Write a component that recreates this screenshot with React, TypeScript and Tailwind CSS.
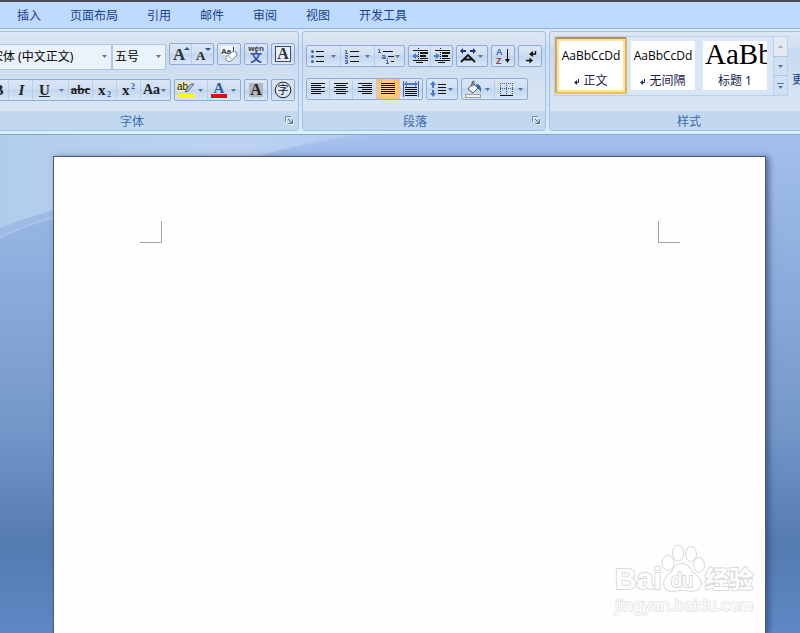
import React from "react";

const CJK = "font-['Noto_Sans','Noto_Sans_CJK_SC',sans-serif]";
const SERIF = "font-['Liberation_Serif','Noto_Sans_CJK_SC',serif]";

type Rect = [number, number, number, number];

function Bars({ items, fill = "#111" }: { items: Rect[]; fill?: string }) {
  return (
    <g fill={fill} shapeRendering="crispEdges">
      {items.map(([x, y, w, h], i) => (
        <rect key={i} x={x} y={y} width={w} height={h} />
      ))}
    </g>
  );
}

function Icon({ children, size = 18 }: { children: React.ReactNode; size?: number }) {
  return (
    <svg width={size} height={18} viewBox={`0 0 ${size} 18`} className="shrink-0 overflow-visible" aria-hidden="true">
      {children}
    </svg>
  );
}

function Arrow() {
  return (
    <svg width="5" height="3" viewBox="0 0 5 3" className="shrink-0" aria-hidden="true">
      <path d="M0 0h5L2.5 3z" fill="#5577a8" />
    </svg>
  );
}

function Tool({
  label,
  width = "flex-1",
  active = false,
  menu = false,
  children,
}: {
  label: string;
  width?: string;
  active?: boolean;
  menu?: boolean;
  children: React.ReactNode;
}) {
  return (
    <button
      type="button"
      aria-label={label}
      title={label}
      className={`flex h-full items-center ${menu ? "justify-between pl-0.5 pr-1" : "justify-center"} ${width} ${
        active ? "bg-radial from-[#ffe0a0] to-[#fdb765]" : ""
      }`}
    >
      {children}
      {menu && <Arrow />}
    </button>
  );
}

function Cluster({ width, children }: { width: string; children: React.ReactNode }) {
  return (
    <div
      className={`flex h-[22px] shrink-0 divide-x divide-[#b7cdea] rounded-[2px] border border-[#8fadd4] bg-[linear-gradient(#dae6f5,#d0dff2_45%,#c2d5ee_50%,#d8e6f8)] ${width}`}
    >
      {children}
    </div>
  );
}

function Group({ title, width, children }: { title: string; width: string; children: React.ReactNode }) {
  return (
    <section
      aria-label={title}
      className={`flex shrink-0 flex-col rounded-[3px] border border-[#a3c0e0] bg-[linear-gradient(#dce6f3,#d4e0f0_15px,#c8d9ee_16px,#dbe7f6_80px)] ${width}`}
    >
      <div className="h-20">{children}</div>
      <div className="flex h-[19px] items-center bg-[#c2d8f1] text-[#3e6aaa]">
        <h2 className="flex-1 pt-0.5 text-center text-xs leading-4">{title}</h2>
        <button type="button" aria-label={`${title}设置`} className="flex h-4 w-[18px] items-center justify-center">
          <svg width="9" height="9" viewBox="0 0 9 9" aria-hidden="true">
            <path d="M1.500 7V1.500H7M9 3.500v5H3.500" fill="none" stroke="#fff" strokeOpacity=".8" />
            <path d="M.5 6V.5H6" fill="none" stroke="#6689b5" />
            <path d="M3 3l4 4M7.500 3.500v4h-4" fill="none" stroke="#49709f" />
          </svg>
        </button>
      </div>
    </section>
  );
}

function Combo({ label, value, width, text }: { label: string; value: string; width: string; text: string }) {
  return (
    <label className={`relative block h-[26px] ${width}`}>
      <select
        aria-label={label}
        className={`h-full w-full appearance-none border border-[#afc6e4] bg-[#eaf2fb] text-xs text-black outline-none ${text}`}
      >
        <option>{value}</option>
      </select>
      <span className="pointer-events-none absolute top-[12px] right-[5px]">
        <Arrow />
      </span>
    </label>
  );
}

const lines = (xs: [number, number][]): Rect[] => xs.map(([x, w], i) => [x, 3 + i * 2, w, 1]);

function FontGroup() {
  return (
    <Group title="字体" width="-ml-[17px] w-[316px]">
      <div className="flex flex-col gap-2.5 pt-[11px] pr-[3px]">
        <div className="flex h-[26px] gap-[3px]">
          <div className="flex flex-1">
            <Combo label="字体名称" value="宋体 (中文正文)" width="flex-1" text="pl-1.5" />
            <Combo label="字号" value="五号" width="w-[54px]" text="pl-0.5" />
          </div>
          <Cluster width="w-[45px]">
            <Tool label="增大字体">
              <Icon size={20}>
                <text x="2" y="15" className={`${SERIF} text-[17px] font-bold`} fill="#333">A</text>
                <path d="M13 5l3-3 3 3z" fill="#2c55a5" />
              </Icon>
            </Tool>
            <Tool label="缩小字体">
              <Icon size={20}>
                <text x="3" y="15" className={`${SERIF} text-[13px] font-bold`} fill="#222">A</text>
                <path d="M12 3h6l-3 3z" fill="#2c55a5" />
              </Icon>
            </Tool>
          </Cluster>
          <Cluster width="w-6">
            <Tool label="清除格式">
              <Icon size={20}>
                <rect x="2" y="1" width="14" height="9" fill="#f5f8fc" />
                <text x="2" y="9" className="font-['Liberation_Sans',sans-serif] text-[8px] font-bold" fill="#333">Aa</text>
                <path d="M14.500 2v6" stroke="#333" />
                <path d="M7 12l6-5q2-1 4 0 2 2 0 4l-5 5q-2 1-4 0-2-2-1-4z" fill="#fff" stroke="#7685a0" />
                <path d="M9 10.500l4 4" stroke="#7685a0" />
              </Icon>
            </Tool>
          </Cluster>
          <Cluster width="w-6">
            <Tool label="拼音指南">
              <Icon size={20}>
                <text x="10" y="6" textAnchor="middle" className="font-['Liberation_Sans',sans-serif] text-[8px] font-bold" fill="#333">wén</text>
                <text x="10" y="17" textAnchor="middle" className={`${CJK} text-[12px] font-bold`} fill="#2f4fb5">文</text>
              </Icon>
            </Tool>
          </Cluster>
          <Cluster width="w-6">
            <Tool label="字符边框">
              <Icon size={18}>
                <rect x="1.500" y="1.500" width="15" height="15" fill="#e8effa" stroke="#3d4a60" />
                <text x="9" y="14" textAnchor="middle" className={`${SERIF} text-[16px] font-bold`} fill="#333">A</text>
              </Icon>
            </Tool>
          </Cluster>
        </div>

        <div className={`flex justify-end gap-[3px] text-[#222] ${SERIF}`}>
          <Cluster width="w-[187px]">
            <Tool label="加粗" width="w-6">
              <b className="pl-1 text-[15px] leading-5">B</b>
            </Tool>
            <Tool label="倾斜" width="w-6">
              <b className="pl-0.5 text-[15px] leading-5 italic">I</b>
            </Tool>
            <Tool label="下划线" width="w-9" menu>
              <b className="pl-1 text-[15px] leading-5 underline">U</b>
            </Tool>
            <Tool label="删除线" width="w-6">
              <b className="text-[13px] leading-5 line-through">abc</b>
            </Tool>
            <Tool label="下标" width="w-6">
              <Icon>
                <text x="2" y="14" className={`${SERIF} text-[15px] font-bold`} fill="#222">x</text>
                <text x="11" y="16" className={`${SERIF} text-[8px] font-bold`} fill="#2d5fb4">2</text>
              </Icon>
            </Tool>
            <Tool label="上标" width="w-6">
              <Icon>
                <text x="2" y="14" className={`${SERIF} text-[15px] font-bold`} fill="#222">x</text>
                <text x="11" y="8" className={`${SERIF} text-[8px] font-bold`} fill="#2d5fb4">2</text>
              </Icon>
            </Tool>
            <Tool label="更改大小写" menu>
              <b className="text-[14px] leading-5">Aa</b>
            </Tool>
          </Cluster>
          <Cluster width="w-[67px]">
            <Tool label="突出显示" menu>
              <Icon size={19}>
                <rect x="0" y="1" width="11" height="10" fill="#f3f1a6" />
                <text x="0" y="9" className="font-['Liberation_Sans',sans-serif] text-[10px]" fill="#111">ab</text>
                <path d="M17 3l-6 7-3 1 2-3 4-5z" fill="#c8d5e4" stroke="#52627a" />
                <rect x="1" y="13" width="16" height="4" fill="#ffff00" />
              </Icon>
            </Tool>
            <Tool label="字体颜色" menu>
              <Icon size={19}>
                <text x="9" y="12" textAnchor="middle" className={`${SERIF} text-[15px] font-bold`} fill="#34559b">A</text>
                <rect x="1" y="13" width="16" height="4" fill="#e00a12" />
              </Icon>
            </Tool>
          </Cluster>
          <Cluster width="w-6">
            <Tool label="字符底纹">
              <Icon>
                <rect x="2" y="2" width="14" height="14" fill="#b4b6ba" />
                <text x="9" y="14" textAnchor="middle" className={`${SERIF} text-[16px] font-bold`} fill="#222">A</text>
              </Icon>
            </Tool>
          </Cluster>
          <Cluster width="w-6">
            <Tool label="带圈字符">
              <Icon>
                <circle cx="9" cy="9" r="7.800" fill="#dce8f7" stroke="#222" />
                <text x="9" y="13" textAnchor="middle" className={`${CJK} text-[11px]`} fill="#111">字</text>
              </Icon>
            </Tool>
          </Cluster>
        </div>
      </div>
    </Group>
  );
}

function IndentLines() {
  return (
    <>
      <Bars items={[[2, 3, 15, 1], [9, 5, 8, 2], [9, 8, 6, 2], [9, 11, 8, 1], [2, 13, 15, 1], [5, 15, 7, 1]]} />
      <path d="M7.500 1v16" stroke="#111" strokeDasharray="1 1" />
    </>
  );
}

function ParagraphGroup() {
  const blue = "#4263a8";
  return (
    <Group title="段落" width="w-[244px]">
      <div className="flex flex-col gap-[11px] px-[3px] pt-[13px]">
        <div className="flex gap-[3px]">
          <Cluster width="w-[99px]">
            <Tool label="项目符号" menu>
              <Icon>
                <g fill={blue}>
                  <circle cx="3.500" cy="4.500" r="1.500" />
                  <circle cx="3.500" cy="9.500" r="1.500" />
                  <circle cx="3.500" cy="14.500" r="1.500" />
                </g>
                <Bars items={[[7, 4, 8, 1], [7, 9, 8, 1], [7, 14, 8, 1]]} />
              </Icon>
            </Tool>
            <Tool label="编号" menu>
              <Icon>
                <path
                  d="M2 3.500h1.500V6.500M2 6.500h3M2 8.500h2.500v1.500H2.500v1.500H5M2 13.500h2.500v3H2M2.500 15h2"
                  fill="none"
                  stroke={blue}
                />
                <Bars items={[[7, 4, 9, 1], [7, 9, 9, 1], [7, 14, 9, 1]]} />
              </Icon>
            </Tool>
            <Tool label="多级列表" width="w-[29px]" menu>
              <Icon>
                <path
                  d="M1 2.500h1.500V5.500M1 5.500h3M5 8.500h3v3.500M8 10H5.500v1.500H9M9 13.500h1.500V16.500M9 16.500h3M10 11.500h1"
                  fill="none"
                  stroke={blue}
                />
                <Bars items={[[6, 4, 10, 1], [11, 9, 6, 1], [14, 14, 3, 1]]} />
              </Icon>
            </Tool>
          </Cluster>
          <Cluster width="w-[45px]">
            <Tool label="减少缩进量">
              <Icon>
                <IndentLines />
                <path d="M1 9l4-3v2h2v2H5v2z" fill="#4b7bd0" />
              </Icon>
            </Tool>
            <Tool label="增加缩进量">
              <Icon>
                <IndentLines />
                <path d="M7 9L3 6v2H1v2h2v2z" fill="#4b7bd0" />
              </Icon>
            </Tool>
          </Cluster>
          <Cluster width="w-8">
            <Tool label="中文版式" menu>
              <Icon>
                <path d="M2 15l7-7 7 7M5.500 12.500h7" fill="none" stroke="#111" strokeWidth="1.800" />
                <path d="M1 4l3-3v2h3v2H4v2zM17 4l-3-3v2h-3v2h3v2z" fill="#1f2f8f" />
              </Icon>
            </Tool>
          </Cluster>
          <Cluster width="w-6">
            <Tool label="排序">
              <Icon>
                <g className="font-['Liberation_Sans',sans-serif] text-[9px] font-bold">
                  <text x="2" y="8" fill="#3b62b5">A</text>
                  <text x="2" y="17" fill="#a03a48">Z</text>
                </g>
                <path d="M13.500 2v13" stroke="#111" />
                <path d="M11 12h5l-2.500 4z" fill="#111" />
              </Icon>
            </Tool>
          </Cluster>
          <Cluster width="w-6">
            <Tool label="显示编辑标记">
              <Icon>
                <path d="M14.500 4v3H10M5 13.500h5" fill="none" stroke="#111" strokeWidth="1.400" />
                <path d="M8 7l4-3v6zM12 13.500L8.500 10.500v6z" fill="#111" />
              </Icon>
            </Tool>
          </Cluster>
        </div>

        <div className="flex gap-[3px]">
          <Cluster width="w-[117px]">
            <Tool label="左对齐">
              <Icon>
                <Bars items={lines([[2, 14], [2, 10], [2, 14], [2, 10], [2, 14], [2, 10]])} />
              </Icon>
            </Tool>
            <Tool label="居中">
              <Icon>
                <Bars items={lines([[2, 14], [4, 10], [2, 14], [4, 10], [2, 14], [4, 10]])} />
              </Icon>
            </Tool>
            <Tool label="右对齐">
              <Icon>
                <Bars items={lines([[2, 14], [6, 10], [2, 14], [6, 10], [2, 14], [6, 10]])} />
              </Icon>
            </Tool>
            <Tool label="两端对齐" active>
              <Icon>
                <Bars items={lines([[2, 14], [2, 14], [2, 14], [2, 14], [2, 14], [2, 14]])} />
              </Icon>
            </Tool>
            <Tool label="分散对齐">
              <Icon>
                <Bars items={[[3, 7, 12, 1], [3, 9, 12, 1], [3, 11, 12, 1], [3, 13, 12, 1], [3, 15, 12, 1]]} />
                <path d="M1.500 1v16M16.500 1v16" stroke="#3b62b5" />
                <path d="M2 4l3-3v2h8V1l3 3-3 3V5H5v2z" fill="#4b7bd0" />
              </Icon>
            </Tool>
          </Cluster>
          <Cluster width="w-8">
            <Tool label="行距" menu>
              <Icon>
                <path d="M4 1l3 4H5v3H3V5H1zM4 17l3-4H5v-3H3v3H1z" fill="#4b7bd0" />
                <Bars items={[[9, 4, 8, 1], [9, 7, 8, 1], [9, 10, 8, 1], [9, 13, 8, 1]]} />
              </Icon>
            </Tool>
          </Cluster>
          <Cluster width="w-[67px]">
            <Tool label="底纹" menu>
              <Icon>
                <path d="M4 9l5-6 5 5-5 5z" fill="#f4f6fa" stroke="#4b566b" />
                <path d="M8 7V3q0-2 2-2v5" fill="none" stroke="#4b566b" />
                <path d="M12 4q6 0 5 9-1-4-4-5z" fill="#3662ad" />
                <rect x="1.500" y="14.500" width="15" height="3" fill="#f4f1ea" stroke="#9aa1aa" />
              </Icon>
            </Tool>
            <Tool label="边框" menu>
              <Icon>
                <path
                  d="M3.500 3v11M9.500 3v11M15.500 3v11M3 3.500h13M3 8.500h13"
                  stroke="#4c5a78"
                  strokeDasharray="1 1"
                  shapeRendering="crispEdges"
                />
                <Bars items={[[3, 15, 13, 1]]} />
              </Icon>
            </Tool>
          </Cluster>
        </div>
      </div>
    </Group>
  );
}

function ReturnMark() {
  return (
    <svg width="5" height="6" viewBox="0 0 5 6" className="shrink-0" aria-hidden="true">
      <path d="M4.500 0v3.500H2" fill="none" stroke="#1b2a55" />
      <path d="M0 3.500L3 1v5z" fill="#1b2a55" />
    </svg>
  );
}

function StyleCard({
  sample,
  name,
  mark = false,
  selected = false,
  heading = false,
}: {
  sample: string;
  name: string;
  mark?: boolean;
  selected?: boolean;
  heading?: boolean;
}) {
  return (
    <button
      type="button"
      aria-pressed={selected}
      className={`flex w-[72px] flex-col overflow-hidden bg-white bg-clip-padding text-xs ${
        selected
          ? "rounded-[2px] border-2 border-t-[#b98f57] border-r-[#e5b14a] border-b-[#efc341] border-l-[#dfa350] p-0.5 shadow-[inset_0_0_0_2px_#fbe3a3]"
          : "border-4 border-transparent"
      }`}
    >
      <span
        className={`flex h-[26px] w-full overflow-hidden whitespace-nowrap text-black ${
          heading
            ? "items-center pl-0.5 font-['Liberation_Serif',serif] text-[29px]"
            : "items-center justify-center pt-1 font-['Open_Sans',sans-serif] text-xs"
        }`}
      >
        {sample}
      </span>
      <span className="flex h-[23px] w-full items-end justify-center gap-1 leading-[18px] whitespace-nowrap text-[#16214d]">
        {mark && (
          <span className="flex h-[18px] items-center pt-0.5">
            <ReturnMark />
          </span>
        )}
        {name}
      </span>
    </button>
  );
}

function StylesGroup() {
  return (
    <Group title="样式" width="w-[298px]">
      <div className="flex pt-1 pl-1">
        <div className="flex h-[60px] shrink-0 border border-[#b9d0ed] bg-[#d8e6f7]">
          <div className="flex h-[57px]">
            <StyleCard sample="AaBbCcDd" name="正文" mark selected />
            <StyleCard sample="AaBbCcDd" name="无间隔" mark />
            <StyleCard sample="AaBb" name="标题 1" heading />
          </div>
          <div className="ml-0.5 flex w-[14px] flex-col divide-y divide-[#a9c3e4] border-l border-[#b9d0ed] bg-[#cfe0f5]">
            <button type="button" aria-label="上一行" className="flex flex-1 items-center justify-center bg-[#e6e9ee]">
              <svg width="5" height="3" aria-hidden="true">
                <path d="M0 3h5L2.500 0z" fill="#a5acb8" />
              </svg>
            </button>
            <button type="button" aria-label="下一行" className="flex flex-1 items-center justify-center">
              <Arrow />
            </button>
            <button type="button" aria-label="其他样式" className="flex flex-1 flex-col items-center justify-center gap-0.5">
              <span className="h-px w-[7px] bg-[#5577a8]" />
              <Arrow />
            </button>
          </div>
        </div>
        <button type="button" className="flex items-end pb-1 pl-1 text-xs whitespace-nowrap text-[#15428b]">
          <span className="leading-6">更改样式</span>
        </button>
      </div>
    </Group>
  );
}

function Swoosh() {
  return (
    <svg className="absolute top-0 left-0" width="400" height="110" viewBox="0 0 400 110" aria-hidden="true">
      <defs>
        <linearGradient id="sky" x1="0" y1="0" x2="1" y2="0">
          <stop offset="0" stopColor="#b1cdec" />
          <stop offset=".65" stopColor="#bdd2f3" />
          <stop offset="1" stopColor="#b4ccf2" />
        </linearGradient>
      </defs>
      <path d="M0 0H385Q310 7 265 20L54 83Q20 93 0 104z" fill="#a9c3ea" />
      <path d="M0 0H355Q300 8 255 22L54 75Q20 85 0 93z" fill="url(#sky)" />
      <path d="M0 93Q20 85 54 75V81Q20 91 0 102z" fill="#9ebbe3" />
    </svg>
  );
}

function Watermark() {
  return (
    <svg
      className="absolute right-2 bottom-4 overflow-visible"
      width="144"
      height="72"
      viewBox="0 0 144 72"
      role="img"
      aria-label="Baidu 经验"
    >
      <g fill="#fff" stroke="#dadada" strokeWidth="2" style={{ paintOrder: "stroke" }}>
        <text x="2" y="44" className="font-['Liberation_Sans',sans-serif] text-[30px] font-bold">Bai</text>
        <ellipse cx="55" cy="18" rx="5.500" ry="7" />
        <ellipse cx="65" cy="8" rx="5" ry="7.500" />
        <ellipse cx="78" cy="9" rx="5" ry="7" />
        <ellipse cx="86" cy="20" rx="5" ry="7" />
        <path d="M69 19q6 0 10 8 9 6 9 11-1 8-9 8-10-2-19 0-9 0-9-8 0-5 8-11 4-8 10-8z" />
        <text x="58" y="42" className="font-['Liberation_Sans',sans-serif] text-[20px]">du</text>
        <text x="92" y="43" className={`${CJK} text-[24px] font-bold`}>经验</text>
      </g>
      <text
        x="2"
        y="66"
        fill="#fff"
        stroke="#e0e0e0"
        strokeWidth="1.500"
        style={{ paintOrder: "stroke" }}
        className="font-['Noto_Sans',sans-serif] text-[16px]"
      >
        jingyan.baidu.com
      </text>
    </svg>
  );
}

const tabs = ["插入", "页面布局", "引用", "邮件", "审阅", "视图", "开发工具"];

export default function App() {
  return (
    <div className={`flex min-h-screen flex-col overflow-hidden ${CJK}`}>
      <header>
        <nav
          aria-label="功能区"
          className="flex h-[29px] gap-px border-t-2 border-b border-t-[#4d4c55] border-b-[#8fb4e2] bg-[#bfdaff] pl-[3px]"
        >
          {tabs.map((tab) => (
            <button key={tab} type="button" className="px-3.5 pt-0.5 text-xs whitespace-nowrap text-[#15428b]">
              {tab}
            </button>
          ))}
        </nav>
        <div className="flex h-[106px] gap-[3px] overflow-hidden border-b border-b-[#86a7cc] bg-[linear-gradient(#dceafb,#cfe0f5_20px,#d5e5f7_90px,#d8f3fd)] pt-0.5 pb-[3px]">
          <FontGroup />
          <ParagraphGroup />
          <StylesGroup />
        </div>
      </header>
      <main className="relative flex flex-1 flex-col bg-[linear-gradient(#a4c0ec,#a0bde9_5%,#8fafde_25%,#7396c9_60%,#547bb0_82%,#5f88c6)] pt-[21px] pr-[34px] pl-[53px]">
        <Swoosh />
        <article className="relative flex flex-1 justify-between border border-b-0 border-[#4f5b6c] bg-[#fefefe] pt-16 pr-[85px] pl-[86px] shadow-[3px_1px_6px_#2e4570b3]">
          <span className="size-[22px] border-r border-b border-[#a3a3a3]" />
          <span className="size-[22px] border-b border-l border-[#a3a3a3]" />
          <Watermark />
        </article>
      </main>
    </div>
  );
}
